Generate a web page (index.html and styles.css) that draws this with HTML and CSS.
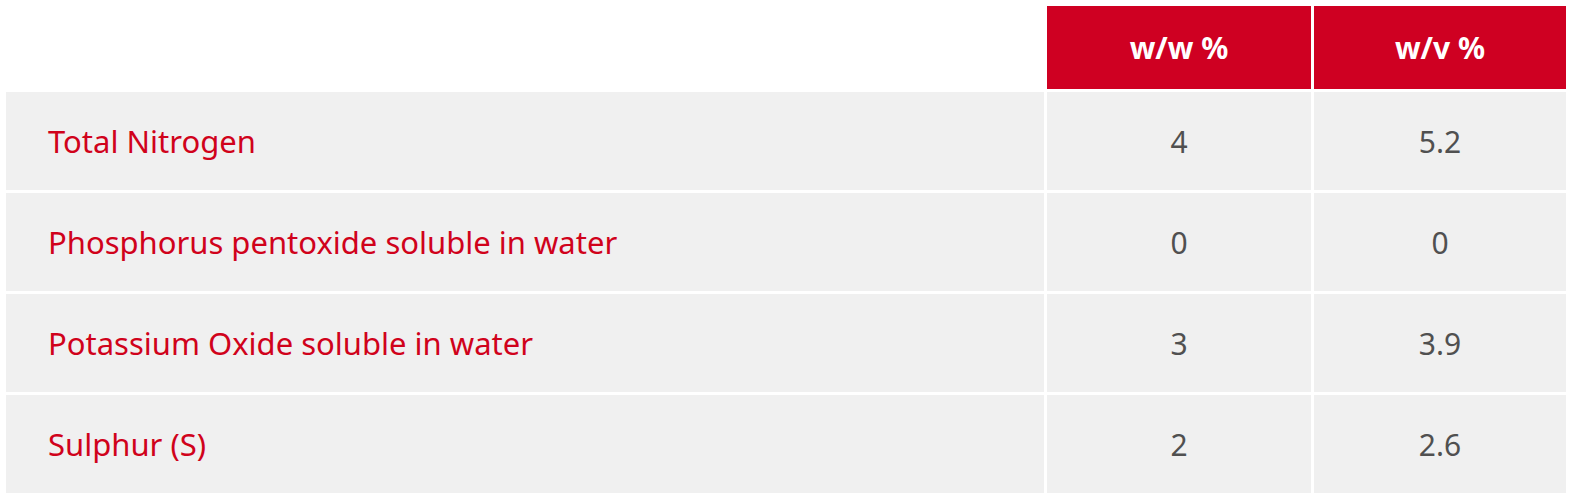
FILE: index.html
```html
<!DOCTYPE html>
<html>
<head>
<meta charset="utf-8">
<link rel="stylesheet" href="styles.css">
</head>
<body>
<div class="wrap">
<table class="analysis">
  <colgroup>
    <col class="c-name">
    <col class="c-ww">
    <col class="c-wv">
  </colgroup>
  <thead>
    <tr>
      <th class="blank"></th>
      <th>w/w %</th>
      <th>w/v %</th>
    </tr>
  </thead>
  <tbody>
    <tr><td class="name">Total Nitrogen</td><td>4</td><td>5.2</td></tr>
    <tr><td class="name">Phosphorus pentoxide soluble in water</td><td>0</td><td>0</td></tr>
    <tr><td class="name">Potassium Oxide soluble in water</td><td>3</td><td>3.9</td></tr>
    <tr><td class="name">Sulphur (S)</td><td>2</td><td>2.6</td></tr>
  </tbody>
</table>
</div>
</body>
</html>
```

FILE: styles.css
```css
html, body {
  margin: 0;
  padding: 0;
  background: #ffffff;
}
.wrap {
  padding: 3px 1px 0 3px;
}
.analysis {
  width: 1566px;
  border-collapse: separate;
  border-spacing: 3px;
  table-layout: fixed;
  font-family: "Noto Sans", "Open Sans", sans-serif;
  font-size: 30px;
}
.c-name { width: 1038px; }
.c-ww { width: 264px; }
.c-wv { width: 252px; }
.analysis th {
  height: 83px;
  padding: 0;
  background: #cf0022;
  color: #ffffff;
  font-weight: 700;
  font-size: 30px;
  text-align: center;
}
.analysis th.blank {
  background: transparent;
}
.analysis td {
  height: 98px;
  padding: 0;
  background: #f0f0f0;
  color: #505050;
  text-align: center;
  vertical-align: middle;
}
.analysis td.name {
  text-align: left;
  padding-left: 42px;
  font-size: 31px;
  color: #d0021b;
}
```
